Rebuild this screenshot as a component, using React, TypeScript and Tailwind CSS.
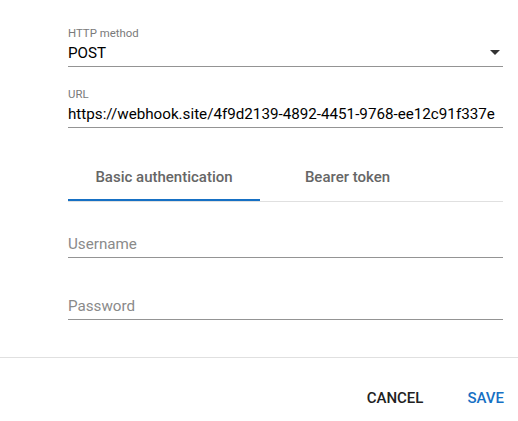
import React, { useState } from 'react';

const font = { fontFamily: 'Roboto, "Liberation Sans", sans-serif' };

const Field = ({ label, value, arrow = false }: { label: string; value: string; arrow?: boolean }) => (
    <div>
        <div className="h-[11px] text-[11.4px] leading-[11px] text-[#7a7a7a] mb-[4px]">{label}</div>
        <div className="flex items-start justify-between h-[24px] pb-[3px] border-b border-[#949494]">
            <span className="text-[15.2px] leading-[20px] text-black whitespace-nowrap">{value}</span>
            {arrow && (
                <svg width="10" height="5" viewBox="0 0 10 5" className="mt-[7px] mr-[3px]">
                    <path d="M0 0 L10 0 L5 5 Z" fill="#333" />
                </svg>
            )}
        </div>
    </div>
);

const Placeholder = ({ text }: { text: string }) => (
    <div className="h-[26px] pb-[6px] border-b border-[#949494]">
        <span className="text-[15.2px] leading-[20px] text-[#8a8a8a]">{text}</span>
    </div>
);

export default function App() {
    const [tab, setTab] = useState<'basic' | 'bearer'>('basic');

    return (
        <div className="w-[518px] h-[421px] bg-white overflow-hidden" style={font}>
            <div className="pl-[68px] pr-[15px] pt-[28px]">
                <Field label="HTTP method" value="POST" arrow />
                <div className="mt-[22px]">
                    <Field label="URL" value="https://webhook.site/4f9d2139-4892-4451-9768-ee12c91f337e" />
                </div>

                <div className="mt-[22px] flex border-b border-[#e0e0e0]">
                    <button
                        onClick={() => setTab('basic')}
                        className={`w-[192px] pt-[17px] pb-[12px] text-[15px] leading-[20px] font-medium text-[#666] border-b-2 ${tab === 'basic' ? 'border-[#1670c4]' : 'border-transparent'}`}
                    >
                        Basic authentication
                    </button>
                    <button
                        onClick={() => setTab('bearer')}
                        className={`w-[175px] pt-[17px] pb-[12px] text-[15px] leading-[20px] font-medium text-[#666] border-b-2 ${tab === 'bearer' ? 'border-[#1670c4]' : 'border-transparent'}`}
                    >
                        Bearer token
                    </button>
                </div>

                <div className="mt-[30px]">
                    <Placeholder text="Username" />
                </div>
                <div className="mt-[36px]">
                    <Placeholder text="Password" />
                </div>
            </div>

            <div className="mt-[37px] border-t border-[#e0e0e0] pt-[30px] pr-[6px] flex justify-end gap-[28px]">
                <button className="px-[8px] text-[15px] leading-[20px] font-medium text-[#212121] uppercase">Cancel</button>
                <button className="px-[8px] text-[15px] leading-[20px] font-medium text-[#1670c4] uppercase">Save</button>
            </div>
        </div>
    );
}
